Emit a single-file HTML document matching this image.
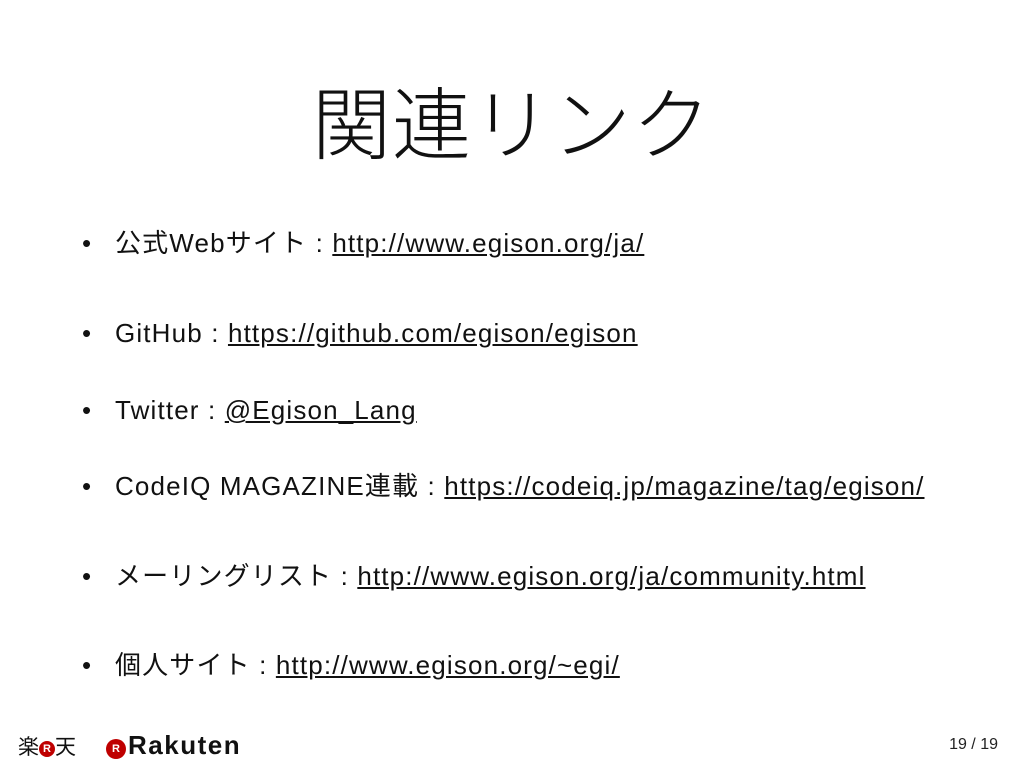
<!DOCTYPE html>
<html><head><meta charset="utf-8"><style>
body{margin:0;width:1024px;height:768px;background:#fff;position:relative;overflow:hidden;font-family:"Liberation Sans","Noto Sans CJK JP",sans-serif;color:#111}
.t{position:absolute;left:0;width:1024px;top:72px;text-align:center;font-size:79px;line-height:94px;font-family:"Noto Sans CJK JP",sans-serif;font-weight:300;letter-spacing:1px}
.l{position:absolute;left:82px;font-size:26px;line-height:30px;white-space:nowrap;letter-spacing:1.15px}
.l b{font-weight:normal;display:inline-block;width:33px}
u{text-underline-offset:2px}
.pg{position:absolute;right:26px;top:736px;font-size:16px;color:#222}
.logo{position:absolute;left:18px;top:731px;font-size:22px;line-height:28px}
.r{display:inline-block;width:16px;height:16px;border-radius:50%;background:#bf0000;color:#fff;font-size:11px;font-weight:bold;text-align:center;line-height:16px;vertical-align:2px;letter-spacing:0}
</style></head><body>
<div class="t">関連リンク</div>
<div class="l" style="top:228px"><b>•</b>公式Webサイト : <u>http://www.egison.org/ja/</u></div>
<div class="l" style="top:318px"><b>•</b>GitHub : <u>https://github.com/egison/egison</u></div>
<div class="l" style="top:395px"><b>•</b>Twitter : <u>@Egison_Lang</u></div>
<div class="l" style="top:471px"><b>•</b>CodeIQ MAGAZINE連載 : <u>https://codeiq.jp/magazine/tag/egison/</u></div>
<div class="l" style="top:561px"><b>•</b>メーリングリスト : <u>http://www.egison.org/ja/community.html</u></div>
<div class="l" style="top:650px"><b>•</b>個人サイト : <u>http://www.egison.org/~egi/</u></div>
<div class="logo"><span style="font-size:21px">楽</span><span class="r">R</span><span style="font-size:21px">天</span><span style="display:inline-block;width:30px"></span><span class="r" style="width:20px;height:20px;line-height:20px">R</span><span style="font-weight:bold;font-size:26px;letter-spacing:1.5px;margin-left:2px">Rakuten</span></div>
<div class="pg">19 / 19</div>
</body></html>
